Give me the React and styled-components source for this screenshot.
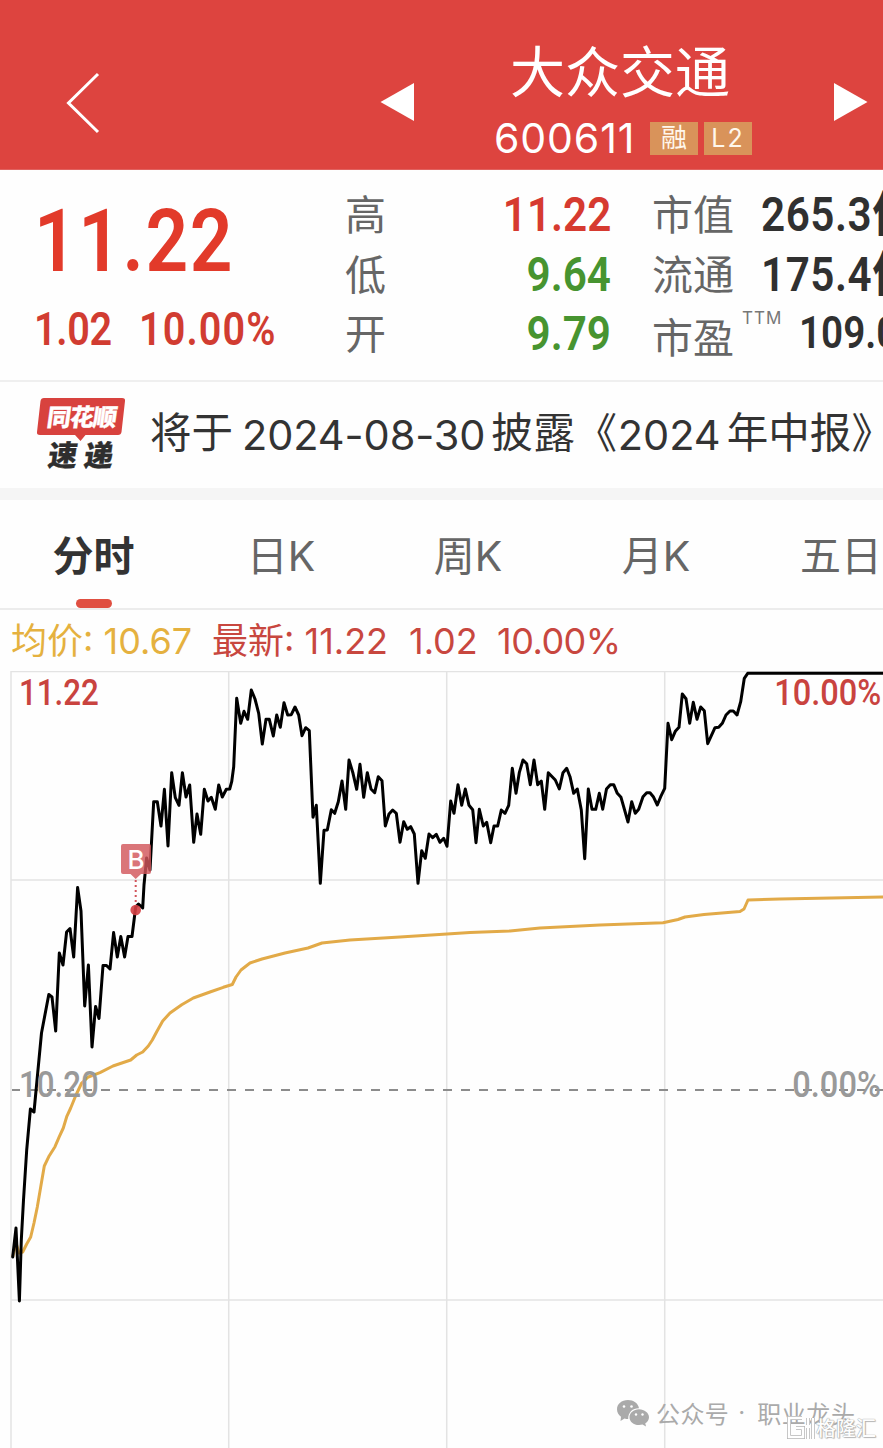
import React from "react";
import styled, { createGlobalStyle } from "styled-components";

const GlobalStyle = createGlobalStyle`
  * { box-sizing: border-box; }
  html, body { margin: 0; padding: 0; }
  body { background: #fefefe; overflow: hidden; }
`;

const SANS = `Inter, "Noto Sans CJK SC", sans-serif`;
const CJK = `"Noto Sans CJK SC", sans-serif`;
const DIN = `Roboto, "Noto Sans CJK SC", sans-serif`;

const Screen = styled.main`
  width: 883px;
  height: 1448px;
  overflow: hidden;
  display: flex;
  flex-direction: column;
  background: #fefefe;
  font-family: ${SANS};
  color: #333;
  white-space: nowrap;
`;

const Header = styled.header`
  height: 170px;
  flex: none;
  display: flex;
  align-items: flex-start;
  background: #dd443f;
  border-bottom: 1px solid #e0625f;
  color: #fff;
  padding-left: 65px;
`;

const BackIcon = styled.svg`
  width: 36px;
  height: 64px;
  margin-top: 71px;
  flex: none;
`;

const ArrowIcon = styled.svg`
  width: 36px;
  height: 40px;
  margin-top: 82px;
  margin-left: ${(p) => p.$gap}px;
  flex: none;
`;

const TitleBlock = styled.div`
  width: 258px;
  margin-left: 79px;
  padding-top: 38px;
  flex: none;
`;

const StockName = styled.h1`
  margin: 0 0 0 16px;
  font: 400 55px/60px ${CJK};
`;

const CodeRow = styled.div`
  display: flex;
  align-items: center;
  height: 46px;
  margin-top: 17px;
`;

const StockCode = styled.span`
  width: 156px;
  flex: none;
  font: 400 41px/46px ${SANS};
  letter-spacing: 0.9px;
`;

const Tag = styled.span`
  width: 48px;
  height: 33px;
  flex: none;
  margin-right: 6px;
  background: #d9935a;
  color: #fff7ec;
  text-align: center;
  font: 400 ${(p) => p.$size}px/${(p) => p.$line}px ${SANS};
  letter-spacing: ${(p) => p.$track || 0}px;
`;

const Quote = styled.section`
  height: 212px;
  flex: none;
  display: flex;
  border-bottom: 2px solid #efefef;
`;

const PriceBlock = styled.div`
  width: 345px;
  padding: 27px 0 0 34px;
  color: #e23a2a;
  font-family: ${DIN};
  font-weight: 600;
`;

const Price = styled.div`
  width: 250px;
  font-size: 87px;
  line-height: 88px;
  letter-spacing: 1.8px;
  transform: scaleX(0.86);
  transform-origin: left;
`;

const Change = styled.div`
  display: flex;
  margin-top: 16px;
  font-size: 46px;
  line-height: 56px;
  color: #d13c31;
`;

const ChangeValue = styled.span`
  width: ${(p) => p.$width}px;
  letter-spacing: ${(p) => p.$track}px;
  transform: scaleX(0.86);
  transform-origin: left;
`;

const StatColumn = styled.div`
  width: ${(p) => p.$width}px;
  margin-right: ${(p) => p.$gap || 0}px;
  padding-top: 15px;
  flex: none;
`;

const StatRow = styled.div`
  display: flex;
  align-items: flex-start;
  justify-content: ${(p) => (p.$spread ? "space-between" : "flex-start")};
  height: 59.5px;
`;

const StatLabel = styled.span`
  margin-top: ${(p) => p.$drop || -2}px;
  font: 400 41px/59px ${CJK};
  color: #666;
`;

const Sup = styled.sup`
  margin: 2px 0 0 8px;
  font: 400 17px/24px ${SANS};
  letter-spacing: 1px;
  color: #777;
`;

const StatValue = styled.span`
  font: 600 ${(p) => p.$size || 48}px/59px ${DIN};
  letter-spacing: ${(p) => p.$track || 0}px;
  margin-left: ${(p) => p.$gap || 0}px;
  color: ${(p) => p.$color || "#303030"};
  transform: scaleX(0.88);
  transform-origin: ${(p) => (p.$color ? "right" : "left")};
`;

const Notice = styled.section`
  height: 106px;
  flex: none;
  display: flex;
  padding-left: 36px;
`;

const NewsLogo = styled.svg`
  width: 92px;
  height: 80px;
  margin-top: 12px;
  flex: none;
`;

const NoticeText = styled.p`
  display: flex;
  align-items: flex-start;
  margin: 23px 0 0 22px;
  font-size: 41.5px;
  line-height: 60px;
  color: #333;
`;

const Han = styled.span`
  font-family: ${CJK};
  letter-spacing: ${(p) => p.$track || 0}px;
  margin-left: ${(p) => p.$gap || 0}px;
  margin-top: ${(p) => p.$lift || 0}px;
`;

const Latin = styled.span`
  font-family: ${SANS};
  letter-spacing: ${(p) => p.$track || 0}px;
  margin-left: ${(p) => p.$gap || 0}px;
`;

const Tabs = styled.nav`
  height: 122px;
  flex: none;
  display: flex;
  border-top: 12px solid #f5f5f5;
  border-bottom: 2px solid #ececec;
`;

const Tab = styled.div`
  width: ${(p) => p.$width}px;
  flex: none;
  display: flex;
  flex-direction: column;
  align-items: center;
  justify-content: space-between;
  padding-top: 26px;
  font: ${(p) => (p.$active ? 700 : 400)} 41px/60px ${SANS};
  color: ${(p) => (p.$active ? "#333" : "#666")};
`;

const TabBar = styled.i`
  width: 36px;
  height: 9px;
  border-radius: 4.5px;
  background: #e04f41;
`;

const Legend = styled.div`
  height: 61px;
  flex: none;
  display: flex;
  padding-left: 11px;
  font-size: 36px;
  line-height: 63px;
  color: #c8473f;
`;

const Average = styled.span`
  color: #e5b13f;
  width: 201px;
`;

const Figure = styled.span`
  width: ${(p) => p.$width}px;
  letter-spacing: ${(p) => p.$track || 0}px;
`;

const Chart = styled.section`
  position: relative;
  height: 777px;
  flex: none;
`;

const Plot = styled.svg`
  display: block;
`;

const AxisLabel = styled.span`
  position: absolute;
  top: ${(p) => p.$top}px;
  ${(p) => (p.$right ? "right: 2px;" : "left: 19px;")}
  font: 500 36px/42px ${DIN};
  color: ${(p) => p.$color};
  transform: scaleX(${(p) => (p.$right ? 0.905 : 0.87)});
  transform-origin: ${(p) => (p.$right ? "right" : "left")};
`;

const Watermark = styled.div`
  position: absolute;
  left: 616px;
  top: 725px;
  display: flex;
  align-items: center;
  height: 34px;
  color: #aaa;
  font: 400 24px/34px ${CJK};
`;

const WechatIcon = styled.svg`
  width: 34px;
  height: 28px;
  margin-right: 6px;
`;

const SiteMark = styled.div`
  position: absolute;
  left: 786px;
  top: 743px;
  display: flex;
  align-items: center;
  color: #fdfdfd;
  font: 500 20px/28px ${CJK};
  text-shadow: 0 0 1px #999, 0 0 1px #aaa, 1px 1px 1px #bbb;
`;

const pricePoints =
  "12.7,1257 16,1228 19.4,1301 21.3,1240 23.5,1200 26.7,1150 30.4,1109 34,1112 37.7,1073 41.5,1033 48.8,994.5 52,997 55.7,1031 59.3,953 63,965 66.6,932 70,928.5 73.7,957 77.6,887.5 81,911 84.7,1006 88.4,965 92,1047 95.6,1006.5 99,1018.5 103,965.5 106.5,965.5 110,969 113.6,932.6 117.3,957 120.8,936.5 124.6,957 128,936.5 132,936.5 135.7,907 138.5,904 142.7,908 144,885 146.6,858 150,870 153.7,801.7 157.3,801.7 161,826 164.4,789.3 168,846 171.7,772.7 175.3,797.7 179,805.3 182.4,772.7 186,797 189.7,785 193.7,842.3 197,814 200.7,834.3 204.3,789.3 208,801 211.3,797.3 215.3,809.3 218.7,785 222.3,797 226.3,789.3 229.7,789 231.7,781.7 233.7,766.7 236.7,698.3 240.7,723.3 244,711.3 247.7,719.3 251.3,690 255,699 258.7,713.3 262.3,744 266,719.3 269.3,719.3 273.3,736 276.7,715 280.3,727.3 284,702.7 287.7,715 291.3,714.7 295,707 298.7,715 302,735.7 305.7,727.7 309.3,730.7 313,817.3 316.3,805.3 320.3,883.3 324,830.3 327.3,830 331.3,809.7 334.7,813.3 338.3,801.7 342,781 345.7,809.3 349,760 353,773.3 356.7,789.3 360,764.3 363.7,797.3 367.3,772.7 371,789 374.7,792.7 378.3,776.7 382,780.7 385.3,826 389,814 392.7,810 396.3,813.3 400,842.3 403.7,821.7 407.3,829.3 410.7,826.7 414.3,834 418,883.3 421.7,850.7 425.3,858.3 429,834 432.7,837.7 436.3,834.3 440,842.3 443.7,838.3 447,846.3 450.7,801 454,813.3 458,784.7 461.7,805.3 465.3,789 469,805.3 472.7,809.7 476,842.7 479.3,809.3 483.3,826 486.7,822.3 490.7,842.7 494,826 497.7,826 501.3,810 505,813.3 508.7,805.3 512.3,768.3 516,793.3 519.3,772.7 523,760 526.7,763.7 530.3,784.7 534,760 537.7,784.7 541.3,781 544.7,809.3 548.3,772.7 555.3,780 559.3,789 563,772.7 566.7,768.3 570,776.7 573.7,793.3 577.3,789 581.3,810 584.7,858.7 588.3,789 592,809.3 595.7,809.3 599.3,793.3 602.7,809.3 606.5,789 610.3,784.7 613.7,784.7 617.3,793.3 621,797.3 628,822 631.7,801.7 635.3,813.3 638.7,809.3 643,796.7 646.7,792.7 650,792.7 653.3,796.7 657.3,805 660.7,796.7 664.7,788.3 668,723.3 671.7,739.7 675.3,731.3 679,727.3 682.3,694 686,698.7 689.7,723.3 693.3,702.3 697,719.3 700.7,707 704.3,710.7 707.7,743.7 715,727.7 718.7,727.3 722.3,723.3 726,715 730,711 733.3,711 737,715 740.7,701.7 744.3,678.3 747.7,673.3 884,673.3";

const averagePoints =
  "12.7,1257 16,1243 19,1253 22.7,1252 26.7,1244 30.7,1237 34,1223 37.3,1207 40.7,1187 44.3,1166 49.3,1155.7 55,1146.7 59.3,1136.7 63.3,1128 66.7,1116.7 70.7,1108 76,1095 81.7,1083 88.3,1077 100,1072.7 113,1066 130.7,1060 136.7,1055 142.7,1052 148.3,1046 152.3,1040 156.7,1031.7 162.7,1021 170,1013 181.7,1004.7 193.3,998 210,992 223.3,987.3 232.3,984.5 236,977 241,970 250,963 262,959 285,953 308,948 322,943 350,940 400,937 447,934 470,932.5 510,931 540,928 600,925 663,922.7 678,919.5 685,917 704,914.5 740,911.5 744,909 748,900 780,899 884,897";

function PriceChart() {
  return (
    <Plot width="883" height="777" viewBox="0 671 883 777" fill="none">
      <g stroke="#e3e3e3" strokeWidth="1.5">
        <path d="M11 671.5H883M11 880H883M11 1300H883" />
        <path d="M11 671V1448M228.7 671V1448M446.7 671V1448M664.7 671V1448" />
      </g>
      <path d="M12 1090H883" stroke="#8c8c8c" strokeWidth="2" strokeDasharray="9 9" strokeDashoffset="1" />
      <polyline points={averagePoints} stroke="#e2aa48" strokeWidth="3" strokeLinejoin="round" />
      <polyline points={pricePoints} stroke="#000" strokeWidth="3" strokeLinejoin="round" strokeLinecap="round" />
      <path d="M135.7 880V906" stroke="#d2565c" strokeWidth="2" strokeDasharray="2 3" />
      <circle cx="135.7" cy="910" r="5.3" fill="#d43f43" fillOpacity="0.9" />
      <path
        d="M123 844H149Q151 844 151 846V872Q151 874 149 874H141L135.7 879L130.500 874H123Q121 874 121 872V846Q121 844 123 844Z"
        fill="#d2575b"
        fillOpacity="0.82"
      />
      <text x="136" y="868.5" fill="#fff" fontFamily="Inter, sans-serif" fontSize="26" fontWeight="500" textAnchor="middle">B</text>
    </Plot>
  );
}

export default function App() {
  return (
    <Screen>
      <GlobalStyle />
      <Header>
        <BackIcon viewBox="0 0 36 64" fill="none">
          <path d="M33 3L3.500 32L33 61" stroke="#fff" strokeWidth="3" />
        </BackIcon>
        <ArrowIcon $gap={278} viewBox="0 0 36 40">
          <path d="M1.500 20L35 1V39Z" fill="#fff" />
        </ArrowIcon>
        <TitleBlock>
          <StockName>大众交通</StockName>
          <CodeRow>
            <StockCode>600611</StockCode>
            <Tag $size={26} $line={31}>融</Tag>
            <Tag $size={25} $line={33} $track={2}>L2</Tag>
          </CodeRow>
        </TitleBlock>
        <ArrowIcon $gap={81} viewBox="0 0 36 40">
          <path d="M1 1V39L34.500 20Z" fill="#fff" />
        </ArrowIcon>
      </Header>

      <Quote>
        <PriceBlock>
          <Price>11.22</Price>
          <Change>
            <ChangeValue $width={105} $track={-0.4}>1.02</ChangeValue>
            <ChangeValue $width={160} $track={1.3}>10.00%</ChangeValue>
          </Change>
        </PriceBlock>
        <StatColumn $width={266} $gap={41}>
          <StatRow $spread>
            <StatLabel>高</StatLabel>
            <StatValue $color="#d63a30">11.22</StatValue>
          </StatRow>
          <StatRow $spread>
            <StatLabel>低</StatLabel>
            <StatValue $color="#479430">9.64</StatValue>
          </StatRow>
          <StatRow $spread>
            <StatLabel>开</StatLabel>
            <StatValue $color="#479430">9.79</StatValue>
          </StatRow>
        </StatColumn>
        <StatColumn $width={231}>
          <StatRow>
            <StatLabel>市值</StatLabel>
            <StatValue $gap={27} $track={0.6}>265.3亿</StatValue>
          </StatRow>
          <StatRow>
            <StatLabel>流通</StatLabel>
            <StatValue $gap={27} $track={0.6}>175.4亿</StatValue>
          </StatRow>
          <StatRow>
            <StatLabel $drop={2}>市盈</StatLabel>
            <Sup>TTM</Sup>
            <StatValue $gap={17} $size={44}>109.09</StatValue>
          </StatRow>
        </StatColumn>
      </Quote>

      <Notice>
        <NewsLogo viewBox="36 394 92 80">
          <path d="M44 398H122Q125.500 398 125 401L121.500 432Q121 435 118 435H85.500L80.500 441L75 435H40Q36.500 435 37 432L40.500 401Q41 398 44 398Z" fill="#d8423e" />
          <g fontFamily={CJK} fontWeight="900" strokeWidth="0.3">
            <text transform="translate(46 426) skewX(-8)" fontSize="24" textLength="70" fill="#fff" stroke="#fff">同花顺</text>
            <text transform="translate(47 466) skewX(-8)" fontSize="29" textLength="65" fill="#2e2e2e" stroke="#2e2e2e">速递</text>
          </g>
        </NewsLogo>
        <NoticeText>
          <Han $lift={-5}>将于</Han>
          <Latin $gap={9} $track={-0.1}>2024-08-30</Latin>
          <Han $lift={-5} $gap={6} $track={0.6}>披露《</Han>
          <Latin>2024</Latin>
          <Han $lift={-5} $gap={6} $track={0.1}>年中报》</Han>
        </NoticeText>
      </Notice>

      <Tabs>
        <Tab $width={187} $active>
          分时
          <TabBar />
        </Tab>
        <Tab $width={188}>日K</Tab>
        <Tab $width={186}>周K</Tab>
        <Tab $width={190}>月K</Tab>
        <Tab $width={180}>五日</Tab>
      </Tabs>

      <Legend>
        <Average>均价: 10.67</Average>
        <Figure $width={197}>最新: 11.22</Figure>
        <Figure $width={88}>1.02</Figure>
        <Figure $width={130} $track={-0.5}>10.00%</Figure>
      </Legend>

      <Chart>
        <PriceChart />
        <AxisLabel $top={1} $color="#c9433f">11.22</AxisLabel>
        <AxisLabel $top={1} $color="#c9433f" $right>10.00%</AxisLabel>
        <AxisLabel $top={393} $color="#999">10.20</AxisLabel>
        <AxisLabel $top={393} $color="#999" $right>0.00%</AxisLabel>
        <Watermark>
          <WechatIcon viewBox="0 0 34 28">
            <path d="M12 1C5.500 1 1 5 1 10.200C1 13.500 2.500 16 5 17.800L4.500 22L8.500 19.500C9.500 19.900 11 20 12.200 20C12 13 17 9 23 9.200C22 4 17.500 1 12 1Z" fill="#aaa" />
            <path d="M23 10.300C17.500 10.300 13.500 14 13.500 18.200C13.500 22.700 17.500 26 23 26C24.300 26 25.500 25.800 26.500 25.500L30 27.500L29.300 24.300C31.500 23 33 20.800 33 18.200C33 14 28.500 10.300 23 10.300Z" fill="#aaa" />
            <g fill="#fff">
              <circle cx="8" cy="7.500" r="1.300" />
              <circle cx="15.500" cy="7.500" r="1.300" />
              <circle cx="20" cy="15.500" r="1.200" />
              <circle cx="26.500" cy="15.500" r="1.200" />
            </g>
          </WechatIcon>
          <Han $track={0.4}>公众号</Han>
          <Latin $gap={9}>·</Latin>
          <Han $gap={12} $track={0.6}>职业龙头</Han>
        </Watermark>
        <SiteMark>
          <svg width="30" height="26" viewBox="0 0 30 26" fill="none">
            <path d="M16 3H3V22H17V13H10M22 3V10M22 13V24M27 3V24" stroke="#b5b5b5" strokeWidth="4" />
            <path d="M16 3H3V22H17V13H10M22 3V10M22 13V24M27 3V24" stroke="#fff" strokeWidth="2.500" />
          </svg>
          格隆汇
        </SiteMark>
      </Chart>
    </Screen>
  );
}
